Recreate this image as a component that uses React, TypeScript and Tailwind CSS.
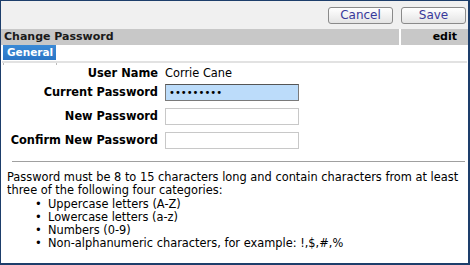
const rules = [
  "Uppercase letters (A-Z)",
  "Lowercase letters (a-z)",
  "Numbers (0-9)",
  "Non-alphanumeric characters, for example: !,$,#,%",
];

const fields = [
  { label: "Current Password", value: "•••••••••", active: true },
  { label: "New Password", value: "", active: false },
  { label: "Confirm New Password", value: "", active: false },
];

const Button = ({ children }: { children: string }) => (
  <button className="w-[65px] h-[17px] rounded-[3px] border border-[#8a8a8a] bg-gradient-to-b from-white to-[#e4e4e4] text-[12px] leading-[15px] text-[#38389a]">
    {children}
  </button>
);

export default function App() {
  return (
    <div className="w-[470px] h-[265px] bg-white border-t border-l border-r-2 border-b-2 border-[#1d3e6b] flex flex-col font-['DejaVu_Sans',Verdana,sans-serif] text-[11.4px] text-black overflow-hidden">
      {/* toolbar */}
      <div className="h-[28px] bg-[#f0f0f0] flex items-center justify-end gap-[8px] pr-[2px] pt-[1px]">
        <Button>Cancel</Button>
        <Button>Save</Button>
      </div>

      {/* header */}
      <div className="h-[16px] bg-[#c8c8c8] flex">
        <div className="flex-1 pl-[3px] font-bold text-[11px] leading-[16px] text-[#1a1a1a]">
          Change Password
        </div>
        <div className="w-[2px] bg-white" />
        <div className="w-[67px] text-right pr-[11px] font-bold text-[11px] leading-[16px]">edit</div>
      </div>

      {/* tabs */}
      <div className="pl-[2px]">
        <div className="w-[53px] h-[15px] bg-gradient-to-b from-[#3b8ad6] to-[#2a76c6] text-white font-bold text-[10.5px] leading-[15px] pl-[4px]">
          General
        </div>
      </div>
      <div className="h-[3px] mt-[1px] mx-[1px] border-t-2 border-[#e2e2e2] flex px-[1px]">
        <div className="w-px h-[2px] bg-[#bbbbbb]" />
        <div className="w-px h-[2px] bg-[#bbbbbb] ml-[52px]" />
      </div>

      {/* form */}
      <div className="pt-[3px] flex flex-col">
        <div className="flex items-center gap-[7px] h-[14px] mb-[3px]">
          <div className="w-[157px] text-right font-bold">User Name</div>
          <div>Corrie Cane</div>
        </div>
        <div className="flex flex-col gap-[7px]">
          {fields.map((f) => (
            <div key={f.label} className="flex items-center gap-[7px] h-[17px]">
              <div className="w-[157px] text-right font-bold whitespace-nowrap">{f.label}</div>
              <div
                className={`w-[134px] h-[17px] border text-[10px] leading-[15px] pl-[3px] ${
                  f.active ? "bg-[#bcdcfa] border-[#7a7a7a] border-t-[#555]" : "bg-white border-[#c8c8c8]"
                }`}
              >
                {f.value}
              </div>
            </div>
          ))}
        </div>
      </div>

      <div className="mt-[12px] ml-[11px] mr-[3px] h-px bg-[#a0a0a0]" />

      {/* rules */}
      <div className="pt-[9px] pl-[6px] leading-[13.3px]">
        <p>
          Password must be 8 to 15 characters long and contain characters from at least three of the following four
          categories:
        </p>
        <ul className="pl-[28px]">
          {rules.map((r) => (
            <li key={r} className="flex">
              <span className="w-[13px]">•</span>
              <span>{r}</span>
            </li>
          ))}
        </ul>
      </div>
    </div>
  );
}
